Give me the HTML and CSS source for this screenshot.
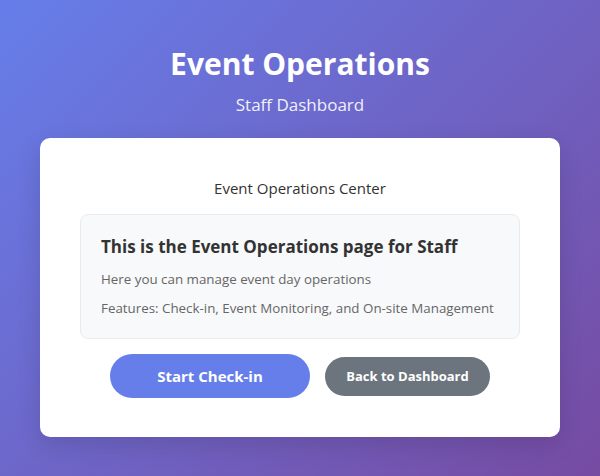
FILE: index.html
```html
<!DOCTYPE html>
<html lang="en">
<head>
<meta charset="utf-8">
<title>Event Operations</title>
<link rel="stylesheet" href="styles.css">
</head>
<body>
<div class="page">
  <header class="header">
    <h1 class="title">Event Operations</h1>
    <p class="subtitle">Staff Dashboard</p>
  </header>
  <main class="card">
    <p class="card-lead">Event Operations Center</p>
    <section class="info">
      <h2 class="info-title">This is the Event Operations page for Staff</h2>
      <p class="info-text">Here you can manage event day operations</p>
      <p class="info-text">Features: Check-in, Event Monitoring, and On-site Management</p>
    </section>
    <div class="actions">
      <button class="btn btn-primary">Start Check-in</button>
      <button class="btn btn-secondary">Back to Dashboard</button>
    </div>
  </main>
</div>
</body>
</html>
```

FILE: styles.css
```css
* { box-sizing: border-box; }
html, body { margin: 0; height: 100%; }
body {
  font-family: "Open Sans", "Noto Sans", sans-serif;
  background: linear-gradient(135deg, #667eea 0%, #764ba2 100%);
  min-height: 476px;
}
.page {
  width: 520px;
  margin: 0 auto;
  padding-top: 43px;
}
.header { text-align: center; color: #fff; }
.title {
  margin: 0;
  font-size: 30px;
  font-weight: 700;
  line-height: 42px;
}
.subtitle {
  margin: 8px 0 0;
  font-size: 17px;
  line-height: 24px;
  opacity: 0.9;
}
.card {
  margin-top: 21px;
  background: #fff;
  border-radius: 10px;
  padding: 38px 40px 39px;
  box-shadow: 0 8px 24px rgba(0,0,0,0.12);
}
.card-lead {
  margin: 0 0 14px;
  text-align: center;
  font-size: 15px;
  line-height: 24px;
  color: #333;
}
.info {
  background: #f8f9fa;
  border: 1px solid #e9ecef;
  border-radius: 8px;
  padding: 20px 20px 19px;
}
.info-title {
  margin: 0 0 10px;
  font-size: 17px;
  font-weight: 700;
  line-height: 24px;
  color: #333;
}
.info-text {
  margin: 0 0 8px;
  font-size: 13.35px;
  line-height: 21px;
  color: #666;
}
.info-text:last-child { margin-bottom: 0; }
.actions {
  margin-top: 15px;
  display: flex;
  justify-content: center;
  align-items: center;
  gap: 15px;
}
.btn {
  border: none;
  border-radius: 22px;
  color: #fff;
  font-family: inherit;
  font-weight: 700;
  cursor: pointer;
}
.btn-primary {
  width: 200px;
  height: 44px;
  background: #667eea;
  font-size: 15px;
}
.btn-secondary {
  width: 165px;
  height: 39px;
  background: #6c757d;
  font-size: 13px;
  border-radius: 20px;
}
```
